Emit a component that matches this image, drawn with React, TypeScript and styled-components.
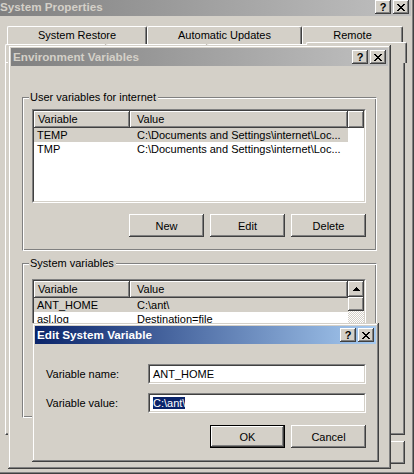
import React from "react";
import styled, { createGlobalStyle, css } from "styled-components";

const FACE = "#d4d0c8";
const HI = "#ffffff";
const SH = "#808080";
const DK = "#404040";

const GlobalStyle = createGlobalStyle`
  html, body { margin: 0; padding: 0; }
  body {
    background: ${FACE};
    font-family: "Liberation Sans", Arial, sans-serif;
    font-size: 11px;
    color: #000;
  }
`;

const raisedEdge = css`
  background: ${FACE};
  box-shadow: inset -1px -1px ${DK}, inset 1px 1px ${HI}, inset -2px -2px ${SH},
    inset 2px 2px ${FACE};
`;

const Desktop = styled.div`
  position: relative;
  width: 414px;
  height: 474px;
  overflow: hidden;
  background: ${FACE};
`;

const Window = styled.div<{ $x: number; $y: number; $w: number; $h: number }>`
  position: absolute;
  isolation: isolate;
  left: ${(p) => p.$x}px;
  top: ${(p) => p.$y}px;
  width: ${(p) => p.$w}px;
  height: ${(p) => p.$h}px;
  box-sizing: border-box;
  padding: 3px;
  background: ${FACE};
  box-shadow: inset -1px -1px ${DK}, inset 1px 1px ${FACE}, inset -2px -2px ${SH},
    inset 2px 2px ${HI};
  display: flex;
  flex-direction: column;
`;

const TitleBar = styled.div<{ $active?: boolean }>`
  flex: none;
  height: 18px;
  display: flex;
  align-items: center;
  padding: 0 2px;
  background: ${(p) =>
    p.$active
      ? "linear-gradient(to right, #0a246a, #a6caf0)"
      : "linear-gradient(to right, #808080, #c0c0c0)"};
  color: ${(p) => (p.$active ? "#ffffff" : FACE)};
`;

const TitleText = styled.span`
  flex: 1;
  min-width: 0;
  font-weight: bold;
  font-size: 11.7px;
  line-height: 18px;
  white-space: nowrap;
  overflow: hidden;
`;

const CaptionButtons = styled.div`
  display: flex;
  gap: 2px;
  flex: none;
`;

const CaptionButton = styled.div`
  ${raisedEdge}
  width: 16px;
  height: 14px;
  box-sizing: border-box;
  display: flex;
  align-items: center;
  justify-content: center;
  color: #000;
  font-weight: bold;
  font-size: 11px;
  line-height: 14px;
`;

/* ---------- System Properties ---------- */

const SheetBody = styled.div`
  flex: 1;
  min-height: 0;
  margin-top: 1px;
  display: flex;
  flex-direction: column;
  padding: 9px 6px 7px 7px;
`;

const TabStrip = styled.div<{ $indent: number }>`
  display: flex;
  flex: none;
  height: 18px;
  padding-left: ${(p) => p.$indent}px;
`;

const Tab = styled.div<{ $w?: number; $selected?: boolean }>`
  box-sizing: border-box;
  ${(p) => (p.$w ? `width: ${p.$w}px; flex: none;` : "flex: 1;")}
  height: 18px;
  border: 1px solid ${HI};
  border-bottom: none;
  border-right-color: ${DK};
  border-radius: 2px 2px 0 0;
  box-shadow: inset -1px 0 ${SH};
  background: ${FACE};
  text-align: center;
  line-height: 17px;
  white-space: nowrap;
  overflow: hidden;
  ${(p) =>
    p.$selected &&
    css`
      height: 21px;
      margin: -2px -2px -1px;
      position: relative;
      z-index: 1;
    `}
`;

const TabPanel = styled.div`
  flex: 1;
  min-height: 0;
  box-sizing: border-box;
  border: 1px solid;
  border-color: ${HI} ${DK} ${DK} ${HI};
  box-shadow: inset -1px -1px ${SH};
`;

const PushButton = styled.button<{ $default?: boolean }>`
  ${raisedEdge}
  width: 75px;
  height: 23px;
  flex: none;
  box-sizing: border-box;
  padding: 0;
  margin: 0;
  border: ${(p) => (p.$default ? "1px solid #000" : "none")};
  font-family: inherit;
  font-size: 11px;
  color: #000;
`;

const ButtonRow = styled.div<{ $mt?: number }>`
  display: flex;
  justify-content: flex-end;
  gap: 6px;
  flex: none;
  margin-top: ${(p) => p.$mt ?? 0}px;
`;

/* ---------- Environment Variables ---------- */

const EnvBody = styled.div`
  flex: 1;
  min-height: 0;
  margin-top: 1px;
  display: flex;
  flex-direction: column;
  padding: 30px 11px 0 11px;
`;

const GroupBox = styled.section<{ $pt: number; $pb: number; $mt?: number }>`
  position: relative;
  flex: none;
  margin-top: ${(p) => p.$mt ?? 0}px;
  border: 1px solid;
  border-color: ${SH} ${HI} ${HI} ${SH};
  box-shadow: inset 1px 1px ${HI}, inset -1px -1px ${SH};
  padding: ${(p) => p.$pt}px 10px ${(p) => p.$pb}px 9px;
  display: flex;
  flex-direction: column;
  gap: 11px;
`;

const Legend = styled.span`
  position: absolute;
  top: -7px;
  left: 6px;
  padding: 0 2px 0 1px;
  background: ${FACE};
  line-height: 13px;
  white-space: nowrap;
`;

const ListFrame = styled.div`
  height: 94px;
  flex: none;
  box-sizing: border-box;
  border: 1px solid;
  border-color: ${SH} ${HI} ${HI} ${SH};
`;

const ListInner = styled.div`
  height: 100%;
  box-sizing: border-box;
  border: 1px solid;
  border-color: ${DK} ${FACE} ${FACE} ${DK};
  background: #fff;
  display: flex;
  overflow: hidden;
`;

const ListColumns = styled.div`
  flex: 1;
  min-width: 0;
  display: flex;
  flex-direction: column;
  overflow: hidden;
`;

const HeaderRow = styled.div`
  display: flex;
  flex: none;
  height: 17px;
`;

const HeaderCell = styled.div<{ $w?: number; $pad?: number }>`
  ${raisedEdge}
  box-sizing: border-box;
  ${(p) => (p.$w ? `width: ${p.$w}px; flex: none;` : "flex: 1;")}
  padding-left: ${(p) => p.$pad ?? 0}px;
  line-height: 17px;
  white-space: nowrap;
  overflow: hidden;
`;

const ItemRow = styled.div<{ $selected?: boolean }>`
  display: flex;
  flex: none;
  height: 14px;
  width: max-content;
  background: ${(p) => (p.$selected ? FACE : "transparent")};
`;

const ItemCell = styled.div<{ $w: number; $pad: number }>`
  width: ${(p) => p.$w}px;
  box-sizing: border-box;
  padding-left: ${(p) => p.$pad}px;
  line-height: 14px;
  white-space: nowrap;
  overflow: hidden;
`;

const VScroll = styled.div`
  width: 16px;
  flex: none;
  display: flex;
  flex-direction: column;
`;

const ScrollArrow = styled.div`
  ${raisedEdge}
  height: 16px;
  flex: none;
  display: flex;
  align-items: center;
  justify-content: center;
`;

const ScrollThumb = styled.div`
  ${raisedEdge}
  height: 14px;
  flex: none;
`;

const ScrollTrack = styled.div`
  flex: 1;
  background: repeating-conic-gradient(${HI} 0 25%, ${FACE} 0 50%) 0 0 / 2px 2px;
`;

/* ---------- Edit System Variable ---------- */

const DialogBody = styled.div`
  flex: 1;
  min-height: 0;
  margin-top: 1px;
  display: flex;
  flex-direction: column;
  padding: 19px 10px 0 11px;
`;

const FieldRow = styled.div`
  display: flex;
  align-items: center;
  height: 20px;
  flex: none;
  & + & {
    margin-top: 9px;
  }
`;

const FieldLabel = styled.label`
  width: 102px;
  flex: none;
  white-space: nowrap;
`;

const TextField = styled.div`
  width: 218px;
  height: 20px;
  flex: none;
  box-sizing: border-box;
  border: 1px solid;
  border-color: ${SH} ${HI} ${HI} ${SH};
`;

const TextFieldInner = styled.div`
  height: 100%;
  box-sizing: border-box;
  border: 1px solid;
  border-color: ${DK} ${FACE} ${FACE} ${DK};
  background: #fff;
  padding: 0 3px;
  line-height: 16px;
  white-space: nowrap;
  overflow: hidden;
`;

const Selection = styled.span`
  background: #0a246a;
  color: #fff;
`;

/* ---------- glyphs ---------- */

const CloseGlyph = () => (
  <svg width="8" height="7" viewBox="0 0 8 7" shapeRendering="crispEdges">
    <path
      fill="#000"
      d="M0 0h2v1H0z M6 0h2v1H6z M1 1h2v1H1z M5 1h2v1H5z M2 2h4v1H2z M3 3h2v1H3z M2 4h4v1H2z M1 5h2v1H1z M5 5h2v1H5z M0 6h2v1H0z M6 6h2v1H6z"
    />
  </svg>
);

const UpGlyph = () => (
  <svg width="7" height="4" viewBox="0 0 7 4" shapeRendering="crispEdges">
    <path fill="#000" d="M3 0h1v1h1v1h1v1h1v1H0V3h1V2h1V1h1z" />
  </svg>
);

const DownGlyph = () => (
  <svg width="7" height="4" viewBox="0 0 7 4" shapeRendering="crispEdges">
    <path fill="#000" d="M0 0h7v1H6v1H5v1H4v1H3V3H2V2H1V1H0z" />
  </svg>
);

const Caption = ({ title, active }: { title: string; active?: boolean }) => (
  <TitleBar $active={active}>
    <TitleText>{title}</TitleText>
    <CaptionButtons>
      <CaptionButton>?</CaptionButton>
      <CaptionButton>
        <CloseGlyph />
      </CaptionButton>
    </CaptionButtons>
  </TitleBar>
);

type Item = { name: string; value: string; selected?: boolean };

const userVars: Item[] = [
  { name: "TEMP", value: "C:\\Documents and Settings\\internet\\Loc...", selected: true },
  { name: "TMP", value: "C:\\Documents and Settings\\internet\\Loc..." },
];

const sysVars: Item[] = [
  { name: "ANT_HOME", value: "C:\\ant\\", selected: true },
  { name: "asl.log", value: "Destination=file" },
];

const VariableList = ({ items, scroll }: { items: Item[]; scroll?: boolean }) => (
  <ListFrame>
    <ListInner>
      <ListColumns>
        <HeaderRow>
          <HeaderCell $w={96} $pad={4}>
            Variable
          </HeaderCell>
          <HeaderCell $w={218} $pad={7}>
            Value
          </HeaderCell>
          {!scroll && <HeaderCell />}
        </HeaderRow>
        {items.map((it) => (
          <ItemRow key={it.name} $selected={it.selected}>
            <ItemCell $w={96} $pad={3}>
              {it.name}
            </ItemCell>
            <ItemCell $w={218} $pad={7}>
              {it.value}
            </ItemCell>
          </ItemRow>
        ))}
      </ListColumns>
      {scroll && (
        <VScroll>
          <ScrollArrow>
            <UpGlyph />
          </ScrollArrow>
          <ScrollThumb />
          <ScrollTrack />
          <ScrollArrow>
            <DownGlyph />
          </ScrollArrow>
        </VScroll>
      )}
    </ListInner>
  </ListFrame>
);

export default function App() {
  return (
    <>
      <GlobalStyle />
      <Desktop>
        <Window $x={-5} $y={-5} $w={419} $h={479}>
          <Caption title="System Properties" />
          <SheetBody>
            <TabStrip $indent={2}>
              <Tab $w={140}>System Restore</Tab>
              <Tab $w={155}>Automatic Updates</Tab>
              <Tab $w={101}>Remote</Tab>
            </TabStrip>
            <TabStrip $indent={0}>
              <Tab />
              <Tab />
              <Tab />
              <Tab $selected />
            </TabStrip>
            <TabPanel />
            <ButtonRow $mt={6}>
              <PushButton />
              <PushButton />
              <PushButton />
            </ButtonRow>
          </SheetBody>
        </Window>

        <Window $x={8} $y={45} $w={383} $h={424}>
          <Caption title="Environment Variables" />
          <EnvBody>
            <GroupBox $pt={11} $pb={13}>
              <Legend>User variables for internet</Legend>
              <VariableList items={userVars} />
              <ButtonRow>
                <PushButton>New</PushButton>
                <PushButton>Edit</PushButton>
                <PushButton>Delete</PushButton>
              </ButtonRow>
            </GroupBox>
            <GroupBox $pt={15} $pb={44} $mt={12}>
              <Legend>System variables</Legend>
              <VariableList items={sysVars} scroll />
            </GroupBox>
          </EnvBody>
        </Window>

        <Window $x={32} $y={323} $w={347} $h={139}>
          <Caption title="Edit System Variable" active />
          <DialogBody>
            <FieldRow>
              <FieldLabel>Variable name:</FieldLabel>
              <TextField>
                <TextFieldInner>ANT_HOME</TextFieldInner>
              </TextField>
            </FieldRow>
            <FieldRow>
              <FieldLabel>Variable value:</FieldLabel>
              <TextField>
                <TextFieldInner>
                  <Selection>{"C:\\ant\\"}</Selection>
                </TextFieldInner>
              </TextField>
            </FieldRow>
            <ButtonRow $mt={12}>
              <PushButton $default>OK</PushButton>
              <PushButton>Cancel</PushButton>
            </ButtonRow>
          </DialogBody>
        </Window>
      </Desktop>
    </>
  );
}
